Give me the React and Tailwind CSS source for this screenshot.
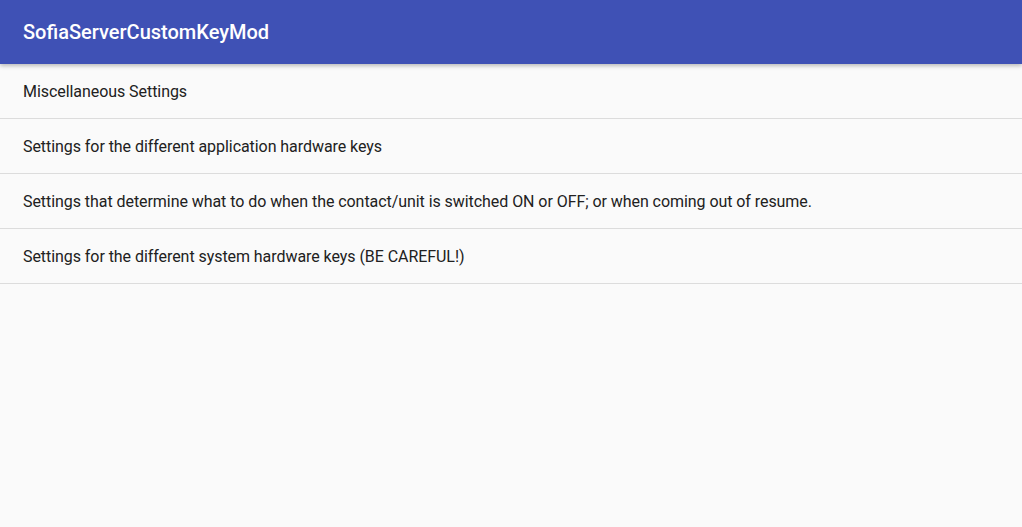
const items = [
  'Miscellaneous Settings',
  'Settings for the different application hardware keys',
  'Settings that determine what to do when the contact/unit is switched ON or OFF; or when coming out of resume.',
  'Settings for the different system hardware keys (BE CAREFUL!)',
];

export default function App() {
  return (
    <div className="flex h-[527px] w-[1022px] flex-col overflow-hidden bg-[#fafafa] font-['Roboto',sans-serif]">
      <header className="relative z-10 flex h-16 shrink-0 items-center bg-[#3f51b5] px-[23px] shadow-[0_2px_4px_rgba(0,0,0,0.25)]">
        <h1 className="text-[20px] font-medium text-white">SofiaServerCustomKeyMod</h1>
      </header>
      <ul>
        {items.map((text) => (
          <li
            key={text}
            className="flex h-[55px] items-center border-b border-[#dcdcdc] px-[23px] pt-[2px] text-[16px] tracking-[-0.06px] text-[#212121]"
          >
            {text}
          </li>
        ))}
      </ul>
    </div>
  );
}
